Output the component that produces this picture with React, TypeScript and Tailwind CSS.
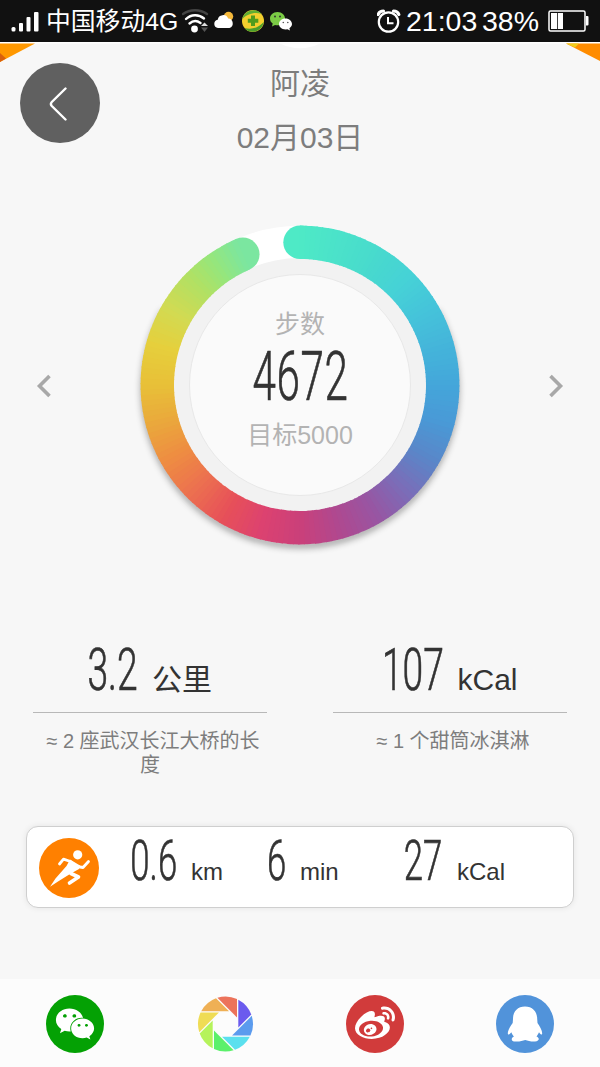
import type { ReactNode } from 'react'
import { FaWeibo, FaWeixin } from 'react-icons/fa6'

const STEPS = 4672
const GOAL = 5000

const RING_STOPS: [number, string][] = [
  [0, '#4eeac6'],
  [30, '#48dacd'],
  [45, '#46d2d6'],
  [60, '#45c3da'],
  [90, '#44a6da'],
  [105, '#4a99d6'],
  [120, '#5a86c8'],
  [135, '#7b6db8'],
  [150, '#9955a2'],
  [165, '#b0488f'],
  [180, '#ca407a'],
  [195, '#dc4270'],
  [210, '#e75059'],
  [225, '#ec7050'],
  [240, '#ee8c42'],
  [255, '#eaa83c'],
  [270, '#e8c038'],
  [285, '#e6cf3c'],
  [300, '#d2da52'],
  [315, '#b0e164'],
  [325, '#96e67c'],
  [337, '#7ae6a2'],
]

function channel(hex: string, i: number) {
  return parseInt(hex.slice(1 + i * 2, 3 + i * 2), 16)
}

function ringColor(angle: number) {
  const next = Math.max(1, RING_STOPS.findIndex(([a]) => a >= angle))
  const [a0, c0] = RING_STOPS[next - 1]
  const [a1, c1] = RING_STOPS[next]
  const t = (angle - a0) / (a1 - a0)
  const rgb = [0, 1, 2].map((i) => Math.round(channel(c0, i) * (1 - t) + channel(c1, i) * t))
  return `rgb(${rgb.join(',')})`
}

function polar(angle: number, r: number) {
  const rad = ((angle - 90) * Math.PI) / 180
  return [180 + r * Math.cos(rad), 180 + r * Math.sin(rad)]
}

function ProgressRing() {
  const r = 142.7
  const end = (STEPS / GOAL) * 360
  const count = 168
  const step = end / count
  const [sx, sy] = polar(0, r)
  const [ex, ey] = polar(end, r)

  return (
    <svg viewBox="0 0 360 360" className="col-start-1 row-start-1 h-[360px] w-[360px]">
      <defs>
        <filter id="ring-shadow" x="-10%" y="-10%" width="120%" height="120%">
          <feDropShadow dx="0" dy="4" stdDeviation="3.5" floodColor="#000" floodOpacity="0.45" />
        </filter>
      </defs>
      <circle cx="180" cy="180" r={r} fill="none" stroke="#fff" strokeWidth="33" />
      <circle cx="180" cy="180" r="127" fill="#f2f2f2" />
      <circle cx="180" cy="180" r="110.5" fill="#fafafa" stroke="#e8e8e8" />
      <path
        d={`M${polar(60, 156).join(' ')}A156 156 0 1 1 ${polar(300, 156).join(' ')}`}
        fill="none"
        stroke="#888"
        strokeWidth="5"
        filter="url(#ring-shadow)"
      />
      <circle cx={sx} cy={sy} r="16.7" fill={ringColor(0)} />
      <circle cx={ex} cy={ey} r="16.7" fill={ringColor(end)} />
      {Array.from({ length: count }, (_, i) => {
        const [x0, y0] = polar(i * step, r)
        const [x1, y1] = polar(Math.min(end, (i + 1) * step + 0.4), r)
        return (
          <path
            key={i}
            d={`M${x0} ${y0}A${r} ${r} 0 0 1 ${x1} ${y1}`}
            fill="none"
            stroke={ringColor((i + 0.5) * step)}
            strokeWidth="33.4"
          />
        )
      })}
    </svg>
  )
}

// Tall narrow numerals, squeezed horizontally inside a box of fixed width
function Digits({ children, className }: { children: ReactNode; className: string }) {
  return (
    <span className={`flex shrink-0 justify-center font-['Roboto'] font-light leading-none text-[#333] ${className}`}>
      <span className="shrink-0 scale-x-[0.62] whitespace-nowrap [-webkit-text-stroke:0.7px_#333]">{children}</span>
    </span>
  )
}

function StatusBar() {
  return (
    <div className="flex h-[42px] items-center bg-[#111] text-white">
      <svg viewBox="0 0 28 24" className="ml-[11px] h-6 w-7 shrink-0" fill="#fff">
        <rect x="0.5" y="18" width="4" height="4.5" rx="1.5" />
        <rect x="8" y="14" width="4" height="8.5" rx="1" />
        <rect x="15.5" y="8" width="4" height="14.5" rx="1" />
        <rect x="23" y="3" width="4.5" height="19.5" rx="1" />
      </svg>
      <span className="ml-[7px] w-[134px] shrink-0 whitespace-nowrap pt-[2px] text-[24.8px] leading-none">中国移动4G</span>
      <svg viewBox="0 0 28 26" className="ml-[2px] h-[26px] w-7 shrink-0" fill="none" strokeLinecap="round">
        <path d="M1 6C8 1 18 1 25 6" stroke="#444" strokeWidth="2.4" />
        <path d="M4 11C9 6 17 6 22 10.500" stroke="#fff" strokeWidth="2.4" />
        <path d="M7.500 15.500C11 12.500 15 12.500 18.500 15" stroke="#fff" strokeWidth="2.4" />
        <circle cx="12.500" cy="21" r="3.4" fill="#fff" />
        <path d="M19 18 22.500 14.500 26 18Z" fill="#ddd" />
        <path d="M19 19.500H26L22.500 24Z" fill="#555" />
      </svg>
      <svg viewBox="0 0 20 18" className="mb-[2px] ml-[4px] h-[18px] w-5 shrink-0">
        <circle cx="14.500" cy="5.500" r="4.700" fill="#f5b83a" />
        <path d="M4 17a4.200 4.200 0 0 1-.3-8.300 5.500 5.500 0 0 1 10.500-1.200A4.900 4.900 0 0 1 15.500 17Z" fill="#fff" />
      </svg>
      <svg viewBox="0 0 24 24" className="ml-[7px] h-6 w-6 shrink-0">
        <circle cx="12" cy="12" r="11" fill="#f2cf2e" />
        <path d="M1.200 10C3 1 16 -2 20.500 5 14 2.500 6 5 1.200 10Z" fill="#5fae33" />
        <path d="M22.800 13C21 23 9 26 3.500 19 11 21 18 18.500 22.800 13Z" fill="#4b9f2c" />
        <path d="M12 6.500v10.500M6.800 11.800h10.500" stroke="#4f9c1d" strokeWidth="4" />
      </svg>
      <svg viewBox="0 0 24 22" className="ml-[4px] h-[22px] w-6 shrink-0">
        <path d="M8.500 2C4 2 1 5 1 8.500c0 2.200 1 3.900 2.700 5L3 16.500l3-1.500c4 1 10-1 10-6.500C16 5 13 2 8.500 2Z" fill="#7bcb45" />
        <path d="M16.500 8.500c-4 0-6.500 2.500-6.500 5.600s2.700 5.400 6.500 5.400l2-.3 2.500 1.300-.6-2.200c1.600-1.100 2.600-2.500 2.600-4.200 0-3.100-2.700-5.600-6.500-5.600Z" fill="#fff" />
        <circle cx="6" cy="6.500" r="1" fill="#333" />
        <circle cx="11" cy="6.500" r="1" fill="#333" />
        <circle cx="14.300" cy="12.500" r=".8" fill="#555" />
        <circle cx="18.800" cy="12.500" r=".8" fill="#555" />
      </svg>
      <svg viewBox="0 0 24 24" className="ml-auto h-6 w-6 shrink-0" fill="none" stroke="#fff">
        <circle cx="11.500" cy="13" r="9.700" strokeWidth="2.200" />
        <path d="M11 8v6.300h5.500" strokeWidth="2" />
        <path d="M1.200 5.500C2 3 4 2 6.500 2M21.800 5.500C21 3 19 2 16.500 2" strokeWidth="3.200" strokeLinecap="round" />
      </svg>
      <span className="ml-[5px] w-[72px] shrink-0 text-[28.5px] leading-none">21:03</span>
      <span className="ml-[4px] w-[58px] shrink-0 text-[28.5px] leading-none">38%</span>
      <svg viewBox="0 0 41 22" className="ml-[8px] mr-[11px] h-[22px] w-[41px] shrink-0">
        <rect x="1" y="1" width="36" height="20" rx="1.500" fill="none" stroke="#fff" strokeWidth="1.500" />
        <path d="M38 6h1.500q1 0 1 1v7.500q0 1-1 1H38Z" fill="#fff" />
        <path d="M3 3h6.200v16H3ZM10 3h5v16H10Z" fill="#fff" />
      </svg>
    </div>
  )
}

function Header() {
  return (
    <header className="relative flex h-[120px] justify-center">
      <svg viewBox="0 0 600 20" className="absolute left-0 top-0 h-5 w-[600px]">
        <path d="M0 0H600V1.500H0Z" fill="#fff" />
        <path d="M0 1.500H35L0 20Z" fill="#ff9800" />
        <path d="M0 11 6 16.500 0 20Z" fill="#d9600c" />
        <path d="M566 1.500H600V19Z" fill="#ff8c00" />
        <path d="M566 1.500H579L575 5.500Z" fill="#f0cc18" />
        <path d="M280 1.500Q300 11 320 1.500Z" fill="#fff" />
      </svg>
      <button className="absolute left-5 top-[21px] flex h-20 w-20 items-center justify-center rounded-full bg-[#606060]">
        <svg viewBox="0 0 18 36" className="mr-[4px] h-9 w-[18px]" fill="none" stroke="#fff" strokeWidth="2.400" strokeLinecap="round">
          <path d="M16.500 3.500 2.800 17Q1 19 2.800 21L16.500 34.500" />
        </svg>
      </button>
      <div className="flex flex-col items-center gap-[24px] pt-[27px] text-[30px] leading-[30px] text-[#7d7d7d]">
        <h1>阿凌</h1>
        <p>02月03日</p>
      </div>
    </header>
  )
}

function Chevron({ flip }: { flip?: boolean }) {
  return (
    <button className={flip ? '-scale-x-100' : ''}>
      <svg viewBox="0 0 16 24" className="mt-[2px] h-6 w-4" fill="none" stroke="#a8a8a8" strokeWidth="3.600">
        <path d="M13.500 2 3.500 12 13.500 22" />
      </svg>
    </button>
  )
}

function StepDial() {
  return (
    <section className="mt-[43px] flex items-center justify-between px-9">
      <Chevron />
      <div className="grid h-[360px] w-[360px] place-items-center">
        <ProgressRing />
        <div className="z-10 col-start-1 row-start-1 flex flex-col items-center pb-[10px] text-[25px] leading-[25px] text-[#b3b3b3]">
          <p>步数</p>
          <Digits className="mb-[12px] mt-[6px] h-[68px] w-[94px] text-[68px] tracking-[1px]">{STEPS}</Digits>
          <p>目标{GOAL}</p>
        </div>
      </div>
      <Chevron flip />
    </section>
  )
}

function Stat({ value, unit, note, width }: { value: string; unit: string; note: string; width: string }) {
  return (
    <div className="flex w-[234px] flex-col items-center">
      <div className="flex h-[73px] shrink-0 items-baseline justify-center gap-[15px] self-stretch border-b border-[#b8b8b8] text-[#333]">
        <Digits className={`text-[60px] ${width}`}>{value}</Digits>
        <span className="text-[30px] leading-none">{unit}</span>
      </div>
      <p className="mt-[16px] w-[224px] text-center indent-[6px] text-[20px] leading-[24px] text-[#7d7d7d]">{note}</p>
    </div>
  )
}

function RunCard() {
  return (
    <section className="mx-[26px] mt-[48px] flex h-[82px] items-center rounded-xl border border-[#cfcfcf] bg-white pl-3 text-[24px] leading-none text-[#333] shadow-[0_0_6px_rgba(0,0,0,0.08)]">
      <svg viewBox="0 0 60 60" className="mt-px h-[60px] w-[60px] shrink-0">
        <circle cx="30" cy="30" r="30" fill="#ff8000" />
        <g fill="#fff">
          <circle cx="38.700" cy="16.800" r="4.600" />
          <path d="M31 21.500 41 27.500 40 31 31 36 19 43.500 11 48.800 16.500 40.500 27.500 28Z" />
        </g>
        <g fill="none" stroke="#fff" strokeWidth="2.800" strokeLinecap="round" strokeLinejoin="round">
          <path d="M20.500 26 24.500 21.200 31.500 23.500 38 28.500 44 29.500 49.500 23.500" />
          <path d="M32 35.500 39.500 39 30.500 45" strokeWidth="3.600" />
        </g>
      </svg>
      <div className="flex items-baseline pb-[12px]">
        <Digits className="ml-[31px] w-[48px] text-[56px]">0.6</Digits>
        <span className="ml-[13px] w-[34px]">km</span>
        <Digits className="ml-[42px] w-[20px] text-[56px]">6</Digits>
        <span className="ml-[13px] w-[40px]">min</span>
        <Digits className="ml-[64px] w-[39px] text-[56px]">27</Digits>
        <span className="ml-[14px]">kCal</span>
      </div>
    </section>
  )
}

// Clockwise from the blade on the upper right
const BLADES = ['#6b5bee', '#5b9bee', '#5be0ee', '#5bf06b', '#b5f35b', '#efdc55', '#efb055', '#ec735b']

function ShareBar() {
  return (
    <nav className="mt-auto grid h-[88px] grid-cols-4 items-center justify-items-center bg-[#fcfcfc] pt-px">
      <button className="flex h-[58px] w-[58px] items-center justify-center rounded-full bg-[#04a104]">
        <FaWeixin className="h-[40px] w-[40px] text-white" />
      </button>
      <button>
        <svg viewBox="-29.500 -29 58 58" className="h-[58px] w-[58px]">
          {BLADES.map((fill, i) => (
            <path key={fill} d="M12.800 -24.300A27.500 27.500 0 0 1 25.800 -9.500L12.800 3.500Z" fill={fill} transform={`rotate(${i * 45})`} />
          ))}
        </svg>
      </button>
      <button className="flex h-[58px] w-[58px] items-center justify-center rounded-full bg-[#d13b3b]">
        <FaWeibo className="h-[40px] w-[40px] text-white" />
      </button>
      <button>
        <svg viewBox="0 0 58 58" className="h-[58px] w-[58px]">
          <circle cx="29" cy="29" r="29" fill="#5193da" />
          <path
            d="M29 11.500C21.500 11.500 17 16.500 17 24L16.700 28C14 31.500 11.800 35.500 11.800 38.500 11.800 40.500 13.500 39.500 15.300 37.200 16 39 17 40.500 18 41.500 14.500 43 15 46.500 19.500 46.500 23.500 46.700 26.500 46 29.200 45 32 46 35 46.700 39 46.500 43.500 46.300 44 43 40.500 41.500 41.500 40.300 42.200 39 43 37.200 44.500 39.500 46.200 40.500 46.200 38.500 46.200 35.500 44 31.500 41.500 28L41.200 24C41.200 16.500 36.500 11.500 29 11.500Z"
            fill="#fff"
          />
        </svg>
      </button>
    </nav>
  )
}

export default function App() {
  return (
    <div className="flex h-[1067px] w-[600px] flex-col overflow-hidden bg-[#f7f7f7] font-['Liberation_Sans','Noto_Sans_CJK_SC',sans-serif]">
      <StatusBar />
      <Header />
      <StepDial />
      <section className="mt-[75px] flex h-[138px] justify-between px-[33px]">
        <Stat value="3.2" unit="公里" note="≈ 2 座武汉长江大桥的长度" width="w-[49px]" />
        <Stat value="107" unit="kCal" note="≈ 1 个甜筒冰淇淋" width="w-[60px]" />
      </section>
      <RunCard />
      <ShareBar />
    </div>
  )
}
